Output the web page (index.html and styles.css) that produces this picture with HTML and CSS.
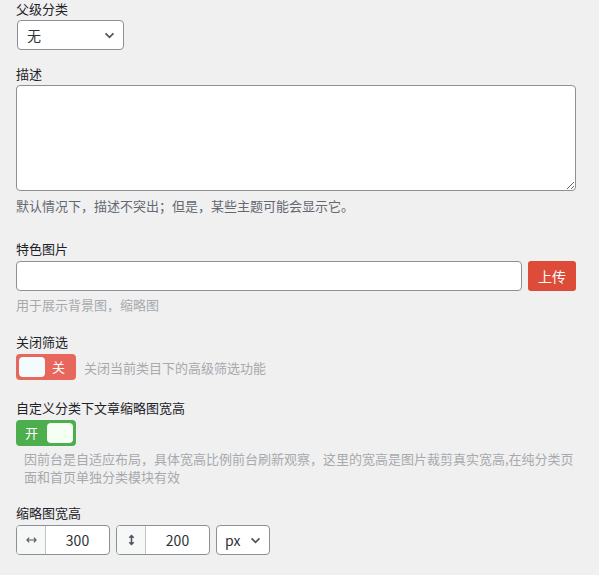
FILE: index.html
```html
<!DOCTYPE html>
<html lang="zh-CN">
<head>
    <meta charset="UTF-8">
    <meta name="viewport" content="width=device-width, initial-scale=1.0">
    <title>编辑分类</title>
    <link rel="stylesheet" href="styles.css">
</head>
<body>

<div class="form">
    <div class="field first">
        <label for="parent">父级分类</label>
        <div class="select small">
            <select id="parent">
                <option>无</option>
            </select>
            <svg class="chevron" viewBox="0 0 12 8"><path d="M1.5 1.5 L6 6 L10.5 1.5"/></svg>
        </div>
    </div>

    <div class="field desc-field">
        <label for="description">描述</label>
        <textarea id="description" rows="5"></textarea>
        <p class="help">默认情况下，描述不突出；但是，某些主题可能会显示它。</p>
    </div>

    <div class="field image-field">
        <label for="thumb">特色图片</label>
        <div class="upload-row">
            <input type="text" id="thumb" class="text-input">
            <button type="button" class="btn-upload">上传</button>
        </div>
        <p class="help light">用于展示背景图，缩略图</p>
    </div>

    <div class="field switch-field">
        <label>关闭筛选</label>
        <div class="switch-row">
            <span class="switch off"><span class="knob"></span><span class="switch-text">关</span></span>
            <span class="switch-note">关闭当前类目下的高级筛选功能</span>
        </div>
    </div>

    <div class="field switch-field">
        <label>自定义分类下文章缩略图宽高</label>
        <div class="switch-row">
            <span class="switch on"><span class="switch-text">开</span><span class="knob"></span></span>
        </div>
        <p class="note">因前台是自适应布局，具体宽高比例前台刷新观察，这里的宽高是图片裁剪真实宽高,在纯分类页面和首页单独分类模块有效</p>
    </div>

    <div class="field size-field">
        <label>缩略图宽高</label>
        <div class="size-row">
            <div class="input-group">
                <span class="addon">
                    <svg viewBox="0 0 12 8" class="icon-h"><path d="M1 4 H11 M3.5 1.5 L1 4 L3.5 6.5 M8.5 1.5 L11 4 L8.5 6.5"/></svg>
                </span>
                <input type="text" value="300">
            </div>
            <div class="input-group">
                <span class="addon">
                    <svg viewBox="0 0 8 12" class="icon-v"><path d="M4 1 V11 M1.5 3.5 L4 1 L6.5 3.5 M1.5 8.5 L4 11 L6.5 8.5"/></svg>
                </span>
                <input type="text" value="200">
            </div>
            <div class="select unit">
                <select>
                    <option>px</option>
                </select>
                <svg class="chevron" viewBox="0 0 12 8"><path d="M1.5 1.5 L6 6 L10.5 1.5"/></svg>
            </div>
        </div>
    </div>
</div>

</body>
</html>
```

FILE: styles.css
```css
body {
    margin: 0;
    background-color: #f0f0f1;
    color: #1d2327;
    font-family: "Noto Sans CJK SC", "Noto Sans", sans-serif;
    font-size: 13px;
}
.form {
    width: 560px;
    padding: 0 23px 0 16px;
}
.field label {
    display: block;
    line-height: 18px;
    margin-bottom: 2px;
}
.desc-field {
    margin-top: 15px;
}
.image-field {
    margin-top: 25px;
}
.image-field label {
    margin-bottom: 3px;
}
.switch-field {
    margin-top: 19px;
}
.switch-field label {
    margin-bottom: 3px;
}
.size-field {
    margin-top: 18px;
}
.size-field label {
    margin-bottom: 3px;
}

/* selects */
.select {
    position: relative;
    display: inline-block;
}
.select select {
    appearance: none;
    -webkit-appearance: none;
    height: 30px;
    border: 1px solid #8c8f94;
    border-radius: 4px;
    background-color: #fff;
    color: #2c3338;
    font-family: inherit;
    font-size: 14px;
    padding: 0 24px 0 9px;
}
.select.small {
    margin-left: 1px;
}
.select.small select {
    width: 107px;
}
.select.unit select {
    width: 54px;
    padding-left: 8px;
}
.chevron {
    position: absolute;
    right: 9px;
    top: 12px;
    width: 11px;
    height: 7px;
    fill: none;
    stroke: #50575e;
    stroke-width: 2;
    pointer-events: none;
}

textarea {
    display: block;
    box-sizing: border-box;
    width: 560px;
    height: 106px;
    border: 1px solid #8c8f94;
    border-radius: 4px;
    background-color: #fff;
    font-family: inherit;
    font-size: 14px;
    margin: 0;
}
.help {
    margin: 6px 0 0;
    line-height: 18px;
    color: #646970;
}
.help.light {
    margin-top: 5px;
    color: #a7aaad;
}

.upload-row {
    display: flex;
    gap: 6px;
}
.text-input {
    flex: 1;
    box-sizing: border-box;
    height: 30px;
    border: 1px solid #8c8f94;
    border-radius: 4px;
    background-color: #fff;
    margin: 0;
}
.btn-upload {
    width: 48px;
    height: 30px;
    border: none;
    border-radius: 3px;
    background-color: #dd4b39;
    color: #fff;
    font-family: inherit;
    font-size: 14px;
    padding: 0;
}

/* switches */
.switch-row {
    display: flex;
    align-items: center;
    gap: 8px;
}
.switch {
    display: flex;
    align-items: center;
    justify-content: space-between;
    box-sizing: border-box;
    width: 60px;
    height: 26px;
    padding: 3px;
    border-radius: 4px;
    color: #fff;
}
.switch.off {
    background-color: #e8675d;
    padding-right: 11px;
}
.switch.on {
    background-color: #4cae4c;
    padding-left: 9px;
}
.knob {
    width: 26px;
    height: 20px;
    border-radius: 4px;
    background-color: #f3fbff;
}
.switch.on .knob {
    background-color: #f6fff4;
}
.switch-text {
    font-size: 13px;
    line-height: 18px;
}
.switch-note {
    color: #a7aaad;
}
.note {
    margin: 4px 0 0;
    padding-left: 8px;
    line-height: 18px;
    color: #a7aaad;
}

/* size inputs */
.size-row {
    display: flex;
    gap: 6px;
}
.input-group {
    display: flex;
    box-sizing: border-box;
    width: 94px;
    height: 30px;
    border: 1px solid #8c8f94;
    border-radius: 4px;
    background-color: #fff;
    overflow: hidden;
}
.addon {
    display: flex;
    align-items: center;
    justify-content: center;
    width: 28px;
    background-color: #f6f7f7;
    border-right: 1px solid #c3c4c7;
}
.addon svg {
    fill: none;
    stroke: #50575e;
}
.icon-h {
    width: 11px;
    height: 8px;
    stroke-width: 1.2;
}
.icon-v {
    width: 7px;
    height: 12px;
    stroke-width: 1.8;
}
.input-group input {
    flex: 1;
    min-width: 0;
    border: none;
    outline: none;
    text-align: center;
    font-family: inherit;
    font-size: 14px;
    color: #2c3338;
    background: transparent;
    padding: 0;
}
```
